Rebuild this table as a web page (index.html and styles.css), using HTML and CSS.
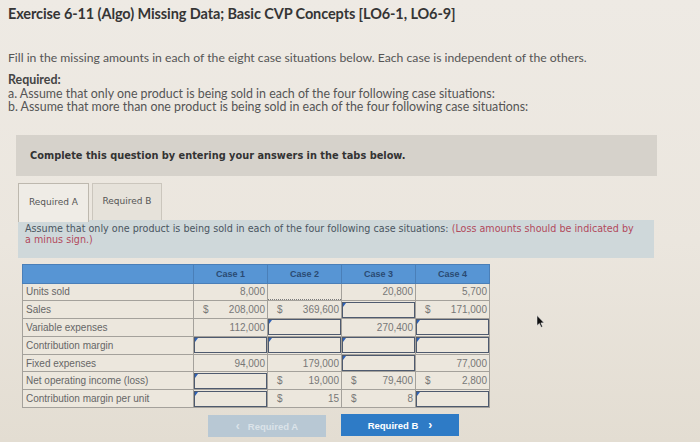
FILE: index.html
```html
<!DOCTYPE html>
<html>
<head>
<meta charset="utf-8">
<link rel="stylesheet" href="styles.css">
</head>
<body>
<div class="page">
  <h1 class="title">Exercise 6-11 (Algo) Missing Data; Basic CVP Concepts [LO6-1, LO6-9]</h1>
  <p class="intro">Fill in the missing amounts in each of the eight case situations below. Each case is independent of the others.</p>
  <div class="req">
    <div class="req-h">Required:</div>
    <div>a. Assume that only one product is being sold in each of the four following case situations:</div>
    <div>b. Assume that more than one product is being sold in each of the four following case situations:</div>
  </div>
  <div class="banner">Complete this question by entering your answers in the tabs below.</div>
  <div class="tabs">
    <div class="tab active">Required A</div>
    <div class="tab">Required B</div>
  </div>
  <div class="panel">
    <div class="pline">Assume that only one product is being sold in each of the four following case situations: <span class="red">(Loss amounts should be indicated by</span></div>
    <div class="pline red">a minus sign.)</div>
  </div>
  <table class="grid">
    <thead>
      <tr><th class="lbl"></th><th>Case 1</th><th>Case 2</th><th>Case 3</th><th>Case 4</th></tr>
    </thead>
    <tbody>
      <tr><td class="lbl">Units sold</td><td class="num">8,000</td><td class="in dot"><div class="box"></div></td><td class="num">20,800</td><td class="num">5,700</td></tr>
      <tr><td class="lbl">Sales</td><td class="num"><span class="d">$</span>208,000</td><td class="num"><span class="d">$</span>369,600</td><td class="in"><div class="box"></div></td><td class="num"><span class="d">$</span>171,000</td></tr>
      <tr><td class="lbl">Variable expenses</td><td class="num">112,000</td><td class="in"><div class="box"></div></td><td class="num">270,400</td><td class="in"><div class="box"></div></td></tr>
      <tr><td class="lbl">Contribution margin</td><td class="in"><div class="box"></div></td><td class="in"><div class="box"></div></td><td class="in"><div class="box"></div></td><td class="in"><div class="box"></div></td></tr>
      <tr><td class="lbl">Fixed expenses</td><td class="num">94,000</td><td class="num">179,000</td><td class="in"><div class="box"></div></td><td class="num">77,000</td></tr>
      <tr><td class="lbl">Net operating income (loss)</td><td class="in"><div class="box"></div></td><td class="num"><span class="d">$</span>19,000</td><td class="num"><span class="d">$</span>79,400</td><td class="num"><span class="d">$</span>2,800</td></tr>
      <tr><td class="lbl">Contribution margin per unit</td><td class="in"><div class="box"></div></td><td class="num"><span class="d">$</span>15</td><td class="num"><span class="d">$</span>8</td><td class="in"><div class="box"></div></td></tr>
    </tbody>
  </table>
  <div class="nav">
    <div class="btn prev"><span class="chev">&lsaquo;</span>Required A</div>
    <div class="btn next">Required B<span class="chev r">&rsaquo;</span></div>
  </div>
</div>
<svg class="cursor" width="9" height="13" viewBox="0 0 9 13"><path d="M1 0.5 L1 10.5 L3.4 8.4 L5.2 12.3 L6.6 11.7 L4.9 7.9 L8 7.8 Z" fill="#111" stroke="#eee" stroke-width="0.5"/></svg>
</body>
</html>
```
FILE: styles.css
```css
html, body { margin: 0; padding: 0; }
body {
  width: 700px; height: 442px; overflow: hidden;
  background: linear-gradient(180deg, #eeeae4 0%, #ebe6de 55%, #e3ddd2 100%);
  font-family: "Lato", "Liberation Sans", sans-serif;
  position: relative;
}
.page { padding: 5px 0 0 8px; }
.title {
  margin: 0; font-size: 14.5px; font-weight: bold; color: #353535;
  line-height: 18px; letter-spacing: -0.1px;
}
.intro {
  margin: 28px 0 0 0; font-size: 12.2px; color: #555; line-height: 14px;
}
.req { margin-top: 8px; font-size: 12.4px; color: #555; line-height: 13.5px; }
.req-h { font-weight: bold; color: #444; }
.banner {
  margin: 21px 0 0 8px; width: 641px; height: 41px; padding: 0 0 0 14px;
  background: #d6d2cb; box-sizing: border-box;
  font-family: "DejaVu Sans", sans-serif; font-weight: bold; font-size: 9.8px; color: #333;
  display: flex; align-items: center;
}
.tabs { display: flex; gap: 3px; margin: 7px 0 0 10px; height: 37px; }
.tab {
  width: 70px; box-sizing: border-box; border: 1px solid #cbc6bd; border-bottom: none;
  background: #e6e2da; font-family: "DejaVu Sans", sans-serif; font-size: 9px; color: #555;
  display: flex; align-items: center; justify-content: center; padding-bottom: 2px;
}
.tab.active { background: #efece6; width: 71px; height: 39px; border-color: #bdb8ae; }
.panel {
  margin-left: 10px; width: 636px; box-sizing: border-box; height: 38px;
  background: #cfd8da; padding: 3px 4px 0 7px;
  font-family: "DejaVu Sans", sans-serif; font-size: 9.6px; line-height: 11.5px; color: #4a5560;
}
.pline { white-space: nowrap; }
.red { color: #b24a5c; }
.grid {
  margin: 6px 0 0 14px; border-collapse: collapse;
  font-family: "Liberation Sans", sans-serif; font-size: 10px; color: #777;
}
.grid th {
  background: #5795d4; color: #2a4a72; font-weight: bold; height: 18px; padding: 0;
  border: 1px solid #4a7fb8; width: 73px; font-size: 9px;
}
.grid th.lbl { width: 170px; }
.grid td {
  height: 17.8px; padding: 0 2px 0 3px; border: 1px solid #a4a19b; background: #ece7dd;
  box-sizing: border-box;
}
.grid td.lbl { color: #666; }
.grid td.num { text-align: right; }
.grid td.num .d { float: left; padding-left: 6px; }
.grid td.in { padding: 0; position: relative; }
.box {
  height: 16px; margin: 0; border: 1.5px solid #4e5a6e; border-right-width: 1px; border-bottom-width: 1px;
  box-sizing: border-box; position: relative;
}
.box::before {
  content: ""; position: absolute; left: 0; top: 0; width: 0; height: 0;
  border-top: 4px solid #2d62b8; border-right: 3px solid transparent;
}
.dot .box { border: none; border-bottom: 1px dotted #7a7a7a; }
.dot .box::before { display: none; }
.nav { display: flex; gap: 15px; margin: 6px 0 0 200px; align-items: flex-start; }
.btn {
  width: 118px; height: 22px; display: flex; align-items: center; justify-content: center;
  font-family: "Liberation Sans", sans-serif; font-weight: bold; font-size: 9.5px;
}
.chev { font-size: 12px; line-height: 1; margin-right: 8px; }
.chev.r { margin-right: 0; margin-left: 10px; }
.prev { background: #b8c8d4; color: #dbe3e9; margin-top: 1px; }
.next { background: #2e7bc6; color: #ffffff; }
.cursor { position: absolute; left: 536px; top: 315px; }
```
